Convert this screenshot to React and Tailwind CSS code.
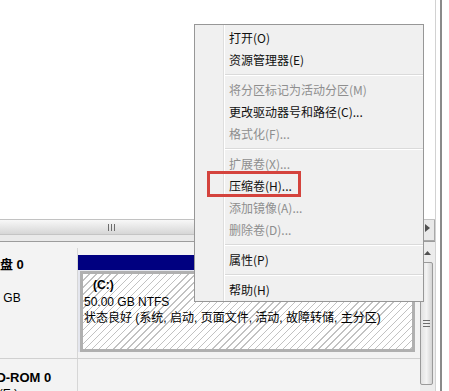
const FONT = { fontFamily: '"Liberation Sans", "Noto Sans CJK SC", sans-serif' };
const MENU_FONT = { fontFamily: '"Noto Sans CJK SC", "Liberation Sans", sans-serif' };

const items = [
  { t: '打开(O)' },
  { t: '资源管理器(E)' },
  'sep',
  { t: '将分区标记为活动分区(M)', d: true },
  { t: '更改驱动器号和路径(C)...' },
  { t: '格式化(F)...', d: true },
  'sep',
  { t: '扩展卷(X)...', d: true },
  { t: '压缩卷(H)...' },
  { t: '添加镜像(A)...', d: true },
  { t: '删除卷(D)...', d: true },
  'sep',
  { t: '属性(P)' },
  'sep',
  { t: '帮助(H)' },
];

function ContextMenu() {
  return (
    <div
      className="absolute left-[194px] top-[24px] w-[230px] h-[278px] border border-[#979797] bg-[#f0f0f0] flex"
      style={MENU_FONT}
    >
      <div className="w-[29px] border-r border-[#dedede]" />
      <div className="flex-1 flex flex-col pt-[2px] border-l border-white">
        {items.map((it, i) =>
          it === 'sep' ? (
            <div key={i} className="h-[8px] shrink-0 flex flex-col justify-center">
              <div className="h-[1px] bg-[#dadada]" />
              <div className="h-[1px] bg-white" />
            </div>
          ) : (
            <div
              key={i}
              className={`h-[22px] shrink-0 leading-[22px] pl-[4px] text-[12px] whitespace-nowrap ${
                it.d ? 'text-[#8e8e8e]' : 'text-[#111111]'
              }`}
            >
              {it.t}
            </div>
          )
        )}
      </div>
    </div>
  );
}

function HGrip() {
  return (
    <svg width="7" height="7" viewBox="0 0 7 7">
      <rect x="0" y="0" width="1" height="7" fill="#6d6d6d" />
      <rect x="3" y="0" width="1" height="7" fill="#6d6d6d" />
      <rect x="6" y="0" width="1" height="7" fill="#6d6d6d" />
    </svg>
  );
}

function VGrip() {
  return (
    <svg width="7" height="7" viewBox="0 0 7 7">
      <rect x="0" y="0" width="7" height="1" fill="#6d6d6d" />
      <rect x="0" y="3" width="7" height="1" fill="#6d6d6d" />
      <rect x="0" y="6" width="7" height="1" fill="#6d6d6d" />
    </svg>
  );
}

export default function App() {
  return (
    <div className="w-[449px] h-[391px] overflow-hidden bg-white flex relative" style={FONT}>
      <div className="w-[435px] h-full flex flex-col">
        <div className="h-[219px] shrink-0 bg-white" />
        {/* horizontal scrollbar */}
        <div className="h-[22px] shrink-0 flex border-t border-[#c2c2c2] bg-[#e9e9e9]">
          <div className="flex-1 overflow-hidden">
            <div className="w-[222px] h-[15px] bg-linear-to-b from-[#f8f8f8] to-[#d6d6d6] border-b border-[#c4c4c4] flex items-center justify-center">
              <HGrip />
            </div>
          </div>
          <div className="w-[15px] h-full border-r border-b border-[#a9a9a9] flex items-start justify-center pt-[4px]">
            <svg width="5" height="8" viewBox="0 0 5 8">
              <path d="M0 0 L5 4 L0 8 Z" fill="#505050" />
            </svg>
          </div>
        </div>
        <div className="h-[1px] shrink-0 bg-[#9c9c9c]" />
        {/* lower disk area */}
        <div className="flex-1 min-h-0 flex bg-[#f3f3f3] overflow-hidden">
          <div className="w-[420px] pt-[6px] flex flex-col">
            {/* disk 0 row */}
            <div className="h-[111px] shrink-0 flex border-b border-[#d0d0d0]">
              <div className="w-[78px] border-r border-[#d6d6d6] overflow-hidden">
                <div className="ml-[-30px] pt-[8px] text-[12px] leading-[17px] text-black whitespace-nowrap">
                  <div className="flex">
                    <div className="w-[17px]" />
                    <span className="font-bold text-[13px]">磁盘 0</span>
                  </div>
                  <div>基本</div>
                  <div>50.00 GB</div>
                  <div>联机</div>
                </div>
              </div>
              <div className="flex-1 pt-[7px]">
                <div className="w-[337px] h-[15px] bg-[#000080]" />
                <div className="w-[337px] pl-[2px] pt-[1px] bg-[#e4e6ee]">
                  <div className="h-[81px] border-[3px] border-[#b0b0b0] bg-white bg-[image:repeating-linear-gradient(135deg,#ffffff_0px,#ffffff_4px,#c2c2c2_4px,#c2c2c2_5px)] pl-[1px] pt-[3px] text-[12px] leading-[16.5px] text-black whitespace-nowrap">
                    <div className="ml-[9px] font-bold">(C:)</div>
                    <div>50.00 GB NTFS</div>
                    <div>状态良好 (系统, 启动, 页面文件, 活动, 故障转储, 主分区)</div>
                  </div>
                </div>
              </div>
            </div>
            {/* cd-rom row */}
            <div className="h-[60px] shrink-0 flex">
              <div className="w-[78px] border-r border-[#d6d6d6] overflow-hidden">
                <div className="ml-[-30px] pt-[10px] text-[12px] leading-[17px] text-black whitespace-nowrap">
                  <div className="flex">
                    <div className="w-[17px]" />
                    <span className="font-bold text-[13px]">CD-ROM 0</span>
                  </div>
                  <div>DVD (E:)</div>
                </div>
              </div>
              <div className="flex-1" />
            </div>
          </div>
          {/* vertical scrollbar */}
          <div className="w-[15px] flex flex-col bg-[#ececec]">
            <div className="h-[19px] shrink-0 flex items-center justify-center pt-[2px]">
              <svg width="7" height="4" viewBox="0 0 7 4">
                <path d="M0 4 L3.5 0 L7 4 Z" fill="#505050" />
              </svg>
            </div>
            <div className="mt-[1px] shrink-0 w-[13px] h-[123px] rounded-[2px] border border-[#9a9a9a] bg-linear-to-r from-[#e2e2e2] via-[#f3f3f3] to-[#d4d4d4] flex items-center justify-center">
              <VGrip />
            </div>
          </div>
        </div>
      </div>
      <div className="w-[1px] h-full bg-[#d2d2d2]" />
      <div className="w-[4px] h-full bg-white" />
      <div className="w-[2px] h-full bg-[#8a8a8a]" />
      <div className="flex-1 h-full bg-white" />

      <ContextMenu />
      <div className="absolute left-[207px] top-[171px] w-[94px] h-[26px] border-[3px] border-[#d4433d]" />
    </div>
  );
}
